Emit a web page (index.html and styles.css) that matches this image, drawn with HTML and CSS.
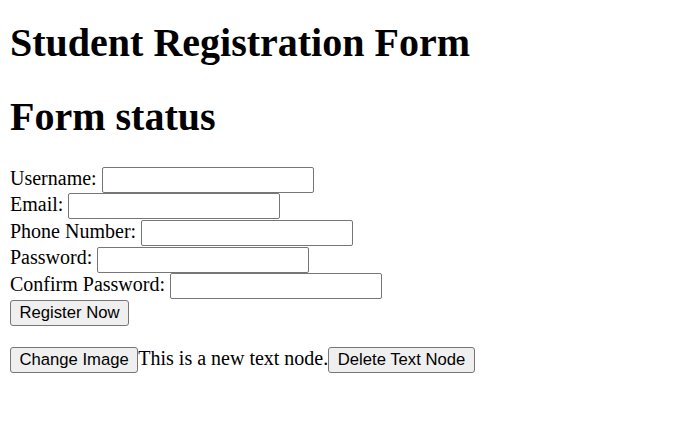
FILE: index.html
```html
<!DOCTYPE html>
<html>
<head>
<meta charset="utf-8">
<title>Student Registration Form</title>
<link rel="stylesheet" href="styles.css">
</head>
<body>
<h1 class="title first">Student Registration Form</h1>
<h1 class="title">Form status</h1>
<form class="form">
<label>Username: </label><input class="field" type="text"><br>
<label>Email: </label><input class="field" type="text"><br>
<label>Phone Number: </label><input class="field" type="text"><br>
<label>Password: </label><input class="field" type="password"><br>
<label>Confirm Password: </label><input class="field" type="password"><br>
<button class="btn" type="button">Register Now</button>
</form>
<div class="extra"><button class="btn" type="button">Change Image</button>This is a new text node.<button class="btn" type="button">Delete Text Node</button></div>
</body>
</html>
```
FILE: styles.css
```css
body {
  margin: 10px;
  font-family: "Liberation Serif", "Times New Roman", serif;
  font-size: 20px;
  color: #000;
  background: #fff;
}
.title {
  font-size: 40px;
  font-weight: bold;
  margin: 26.8px 0;
}
.title.first {
  margin-top: 9px;
}
.form {
  margin: 0;
}
.field {
  box-sizing: border-box;
  width: 212px;
  height: 26px;
  margin: 0.3px 0;
  font-family: "Liberation Sans", Arial, sans-serif;
  font-size: 16.67px;
  padding: 1px 2px;
  border: 1px solid #767676;
  border-radius: 2px;
  background: #fff;
  vertical-align: baseline;
}
.btn {
  box-sizing: border-box;
  height: 26px;
  font-family: "Liberation Sans", Arial, sans-serif;
  font-size: 16.67px;
  padding: 1px 8.5px;
  border: 1px solid #767676;
  border-radius: 3px;
  background: #efefef;
  color: #000;
  margin: 0;
}
.extra {
  margin-top: 21px;
}
```
